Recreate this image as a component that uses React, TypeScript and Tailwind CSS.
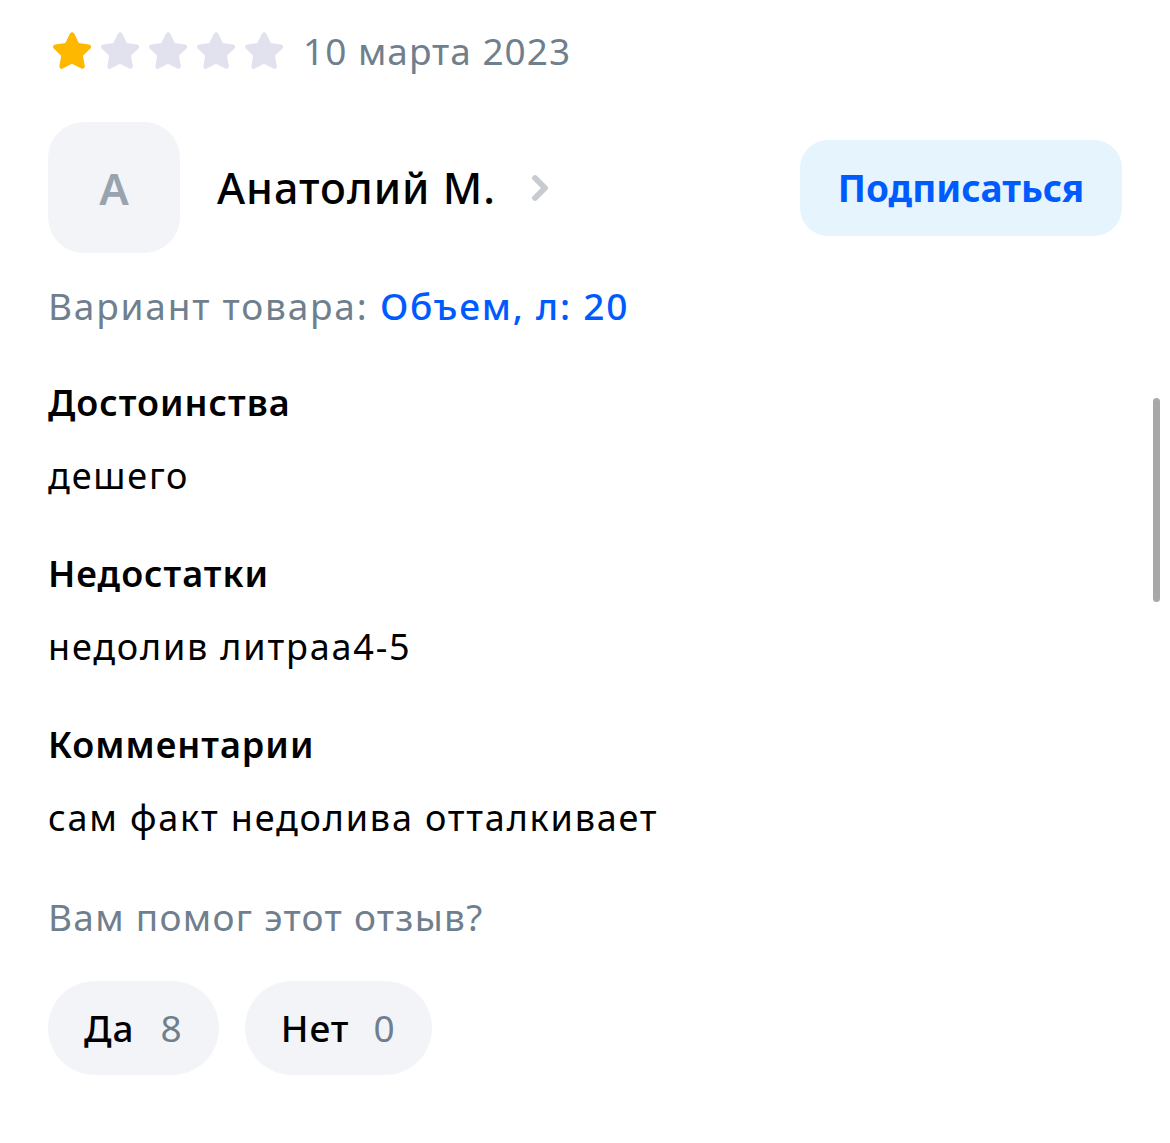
import { ChevronRight } from "lucide-react";

const font = { fontFamily: '"Noto Sans", "Liberation Sans", sans-serif' };

const Star = ({ filled }: { filled: boolean }) => (
  <svg width="48" height="48" viewBox="0 0 24 24">
    <path
      d="M12 2.6c.5 0 .9.3 1.1.7l2.3 4.7 5.1.7c1 .1 1.4 1.4.7 2.1l-3.7 3.6.9 5.1c.2 1-.9 1.7-1.7 1.3L12 18.4l-4.6 2.4c-.9.5-1.9-.3-1.7-1.3l.9-5.1-3.7-3.6c-.7-.7-.3-2 .7-2.1l5.1-.7 2.3-4.7c.2-.4.6-.7 1-.7z"
      fill={filled ? "#ffb800" : "#e1e2ee"}
    />
  </svg>
);

const Section = ({ title, text }: { title: string; text: string }) => (
  <div className="mt-[54px] first:mt-0">
    <h3 className="text-[36px] leading-[44px] font-semibold tracking-[1px] text-black">{title}</h3>
    <p className="mt-[29px] text-[36px] leading-[44px] tracking-[1.8px] text-black">{text}</p>
  </div>
);

export default function App() {
  return (
    <div className="relative w-[1170px] h-[1143px] bg-white overflow-hidden" style={font}>
      <div className="pl-[48px] pr-[48px] pt-[30px]">
        {/* Rating */}
        <div className="flex items-center h-[42px]">
          <div className="flex items-center">
            {[0, 1, 2, 3, 4].map((i) => (
              <Star key={i} filled={i === 0} />
            ))}
          </div>
          <span className="ml-[15px] text-[37px] leading-[42px] tracking-[1px] text-[#707f8d]">10 марта 2023</span>
        </div>

        {/* Author */}
        <div className="mt-[50px] flex items-center justify-between">
          <div className="flex items-center">
            <div className="w-[132px] h-[131px] rounded-[36px] bg-[#f2f4f8] flex items-center justify-center">
              <span className="text-[44px] font-semibold text-[#99a3ae]">А</span>
            </div>
            <span className="ml-[37px] text-[43px] leading-[52px] tracking-[1px] text-black font-medium">Анатолий М.</span>
            <ChevronRight className="ml-[24px] text-[#c8ccd1]" size={40} strokeWidth={3.5} />
          </div>
          <button className="w-[322px] h-[96px] rounded-[28px] bg-[#e6f4fe] text-[#005bff] text-[37px] font-bold">
            Подписаться
          </button>
        </div>

        {/* Variant */}
        <p className="mt-[30px] text-[37px] leading-[46px] tracking-[1.8px]">
          <span className="text-[#707f8d]">Вариант товара: </span>
          <span className="text-[#005bff] font-medium">Объем, л: 20</span>
        </p>

        {/* Sections */}
        <div className="mt-[52px]">
          <Section title="Достоинства" text="дешего" />
          <Section title="Недостатки" text="недолив литраа4-5" />
          <Section title="Комментарии" text="сам факт недолива отталкивает" />
        </div>

        <p className="mt-[55px] text-[37px] leading-[44px] tracking-[1.3px] text-[#707f8d]">Вам помог этот отзыв?</p>

        <div className="mt-[42px] flex gap-[26px]">
          <button className="h-[94px] px-[36px] rounded-full bg-[#f2f4f8] flex items-center gap-[26px] text-[37px] tracking-[1px]">
            <span className="text-black font-medium">Да</span>
            <span className="text-[#707f8d]">8</span>
          </button>
          <button className="h-[94px] px-[36px] rounded-full bg-[#f2f4f8] flex items-center gap-[24px] text-[37px] tracking-[1px]">
            <span className="text-black font-medium">Нет</span>
            <span className="text-[#707f8d]">0</span>
          </button>
        </div>
      </div>

      {/* Scrollbar */}
      <div className="absolute left-[1153px] top-[398px] w-[7px] h-[204px] rounded-full bg-[#a8a8a8]" />
    </div>
  );
}
